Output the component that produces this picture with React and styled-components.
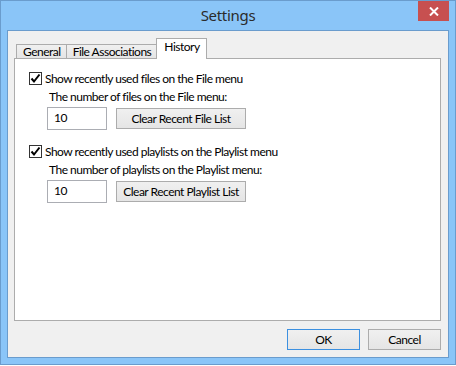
import React from "react";
import styled, {createGlobalStyle} from "styled-components";

const GlobalStyle = createGlobalStyle`
    html, body {
        margin: 0;
        padding: 0;
        background: #ffffff;
    }
    body {
        font-family: Lato, "Liberation Sans", sans-serif;
        font-size: 12px;
        letter-spacing: -0.5px;
        color: #000000;
    }
`;

const Window = styled.div`
    width: 456px;
    height: 365px;
    box-sizing: border-box;
    border: 1px solid #6a9ccd;
    background: #8ac5f8;
    padding: 0 6px 6px 6px;
    display: flex;
    flex-direction: column;
`;

const TitleBar = styled.div`
    height: 29px;
    margin: 0 -6px;
    padding: 0 6px;
    display: grid;
    grid-template-columns: 1fr auto 1fr;
    align-items: start;
`;

const Title = styled.div`
    grid-column: 2;
    margin-top: 4px;
    font-family: "Noto Sans", sans-serif;
    font-size: 15px;
    letter-spacing: -0.3px;
    color: #2b2b2b;
    line-height: 20px;
`;

const CloseButton = styled.div`
    grid-column: 3;
    justify-self: end;
    width: 31px;
    height: 20px;
    background: #c75050;
    display: flex;
    align-items: center;
    justify-content: center;
`;

const Client = styled.div`
    flex: 1;
    border: 1px solid #6a9ccd;
    background: #f0f0f0;
    padding: 7px 7px 7px 6px;
    display: flex;
    flex-direction: column;
`;

const TabStrip = styled.div`
    display: flex;
    align-items: flex-end;
    padding-left: 2px;
    margin-bottom: -1px;
    position: relative;
    z-index: 1;
`;

const Tab = styled.div`
    box-sizing: border-box;
    border: 1px solid #acacac;
    border-bottom: none;
    line-height: 14px;
    height: ${p => p.$active ? "21px" : "14px"};
    margin: ${p => p.$active ? "0 -2px 0 -2px" : "0 0 1px 0"};
    background: ${p => p.$active ? "#ffffff" : "linear-gradient(#f0f0f0, #e5e5e5)"};
    padding-top: ${p => p.$active ? "1px" : "0"};
    padding-left: ${p => p.$active ? "7px" : "6px"};
    padding-right: ${p => p.$active ? "6px" : "6px"};
    position: relative;
    z-index: ${p => p.$active ? 2 : 1};
    white-space: nowrap;
    & + & {
        margin-left: ${p => p.$active ? "-2px" : "-1px"};
    }
`;

const Panel = styled.div`
    height: 263px;
    box-sizing: border-box;
    border: 1px solid #acacac;
    background: #ffffff;
    padding: 13px 14px;
    display: flex;
    flex-direction: column;
`;

const Group = styled.div`
    display: flex;
    flex-direction: column;
    margin-bottom: 15px;
`;

const CheckRow = styled.label`
    display: flex;
    align-items: center;
    gap: 3px;
    height: 13px;
    line-height: 13px;
`;

const Box = styled.span`
    box-sizing: border-box;
    width: 13px;
    height: 13px;
    border: 1px solid #333333;
    background: #ffffff;
    display: flex;
    align-items: center;
    justify-content: center;
`;

const Label = styled.div`
    margin: 6px 0 0 20px;
    line-height: 12px;
`;

const FieldRow = styled.div`
    display: flex;
    align-items: center;
    gap: 9px;
    margin: 4px 0 0 18px;
`;

const Input = styled.div`
    box-sizing: border-box;
    width: 60px;
    height: 23px;
    border: 1px solid #abadb3;
    background: #ffffff;
    padding: 3px 0 0 6px;
    line-height: 14px;
`;

const Button = styled.div`
    box-sizing: border-box;
    width: ${p => p.$width || 73}px;
    height: 21px;
    border: 1px solid ${p => p.$default ? "#3c90e0" : "#acacac"};
    background: linear-gradient(#f0f0f0, #e5e5e5);
    display: flex;
    align-items: center;
    justify-content: center;
    line-height: 14px;
    white-space: nowrap;
`;

const Footer = styled.div`
    margin-top: 8px;
    display: flex;
    justify-content: flex-end;
    gap: 8px;
`;

const Check = () => (
    <svg width="11" height="11" viewBox="0 0 11 11">
        <path d="M1.5 5.5 L4 8.5 L9.5 1.5" fill="none" stroke="#000" strokeWidth="2" />
    </svg>
);

const HistoryGroup = ({text, label, value, button}) => (
    <Group>
        <CheckRow>
            <Box><Check /></Box>
            <span>{text}</span>
        </CheckRow>
        <Label>{label}</Label>
        <FieldRow>
            <Input>{value}</Input>
            <Button $width={130}>{button}</Button>
        </FieldRow>
    </Group>
);

export default () => {
    return (
        <>
            <GlobalStyle />
            <Window>
                <TitleBar>
                    <Title>Settings</Title>
                    <CloseButton>
                        <svg width="10" height="9" viewBox="0 0 10 9">
                            <path d="M1 0.5 L9 8.5 M9 0.5 L1 8.5" stroke="#fff" strokeWidth="2" />
                        </svg>
                    </CloseButton>
                </TitleBar>
                <Client>
                    <TabStrip>
                        <Tab>General</Tab>
                        <Tab>File Associations</Tab>
                        <Tab $active>History</Tab>
                    </TabStrip>
                    <Panel>
                        <HistoryGroup
                            text="Show recently used files on the File menu"
                            label="The number of files on the File menu:"
                            value="10"
                            button="Clear Recent File List"
                        />
                        <HistoryGroup
                            text="Show recently used playlists on the Playlist menu"
                            label="The number of playlists on the Playlist menu:"
                            value="10"
                            button="Clear Recent Playlist List"
                        />
                    </Panel>
                    <Footer>
                        <Button $default>OK</Button>
                        <Button>Cancel</Button>
                    </Footer>
                </Client>
            </Window>
        </>
    )
}
